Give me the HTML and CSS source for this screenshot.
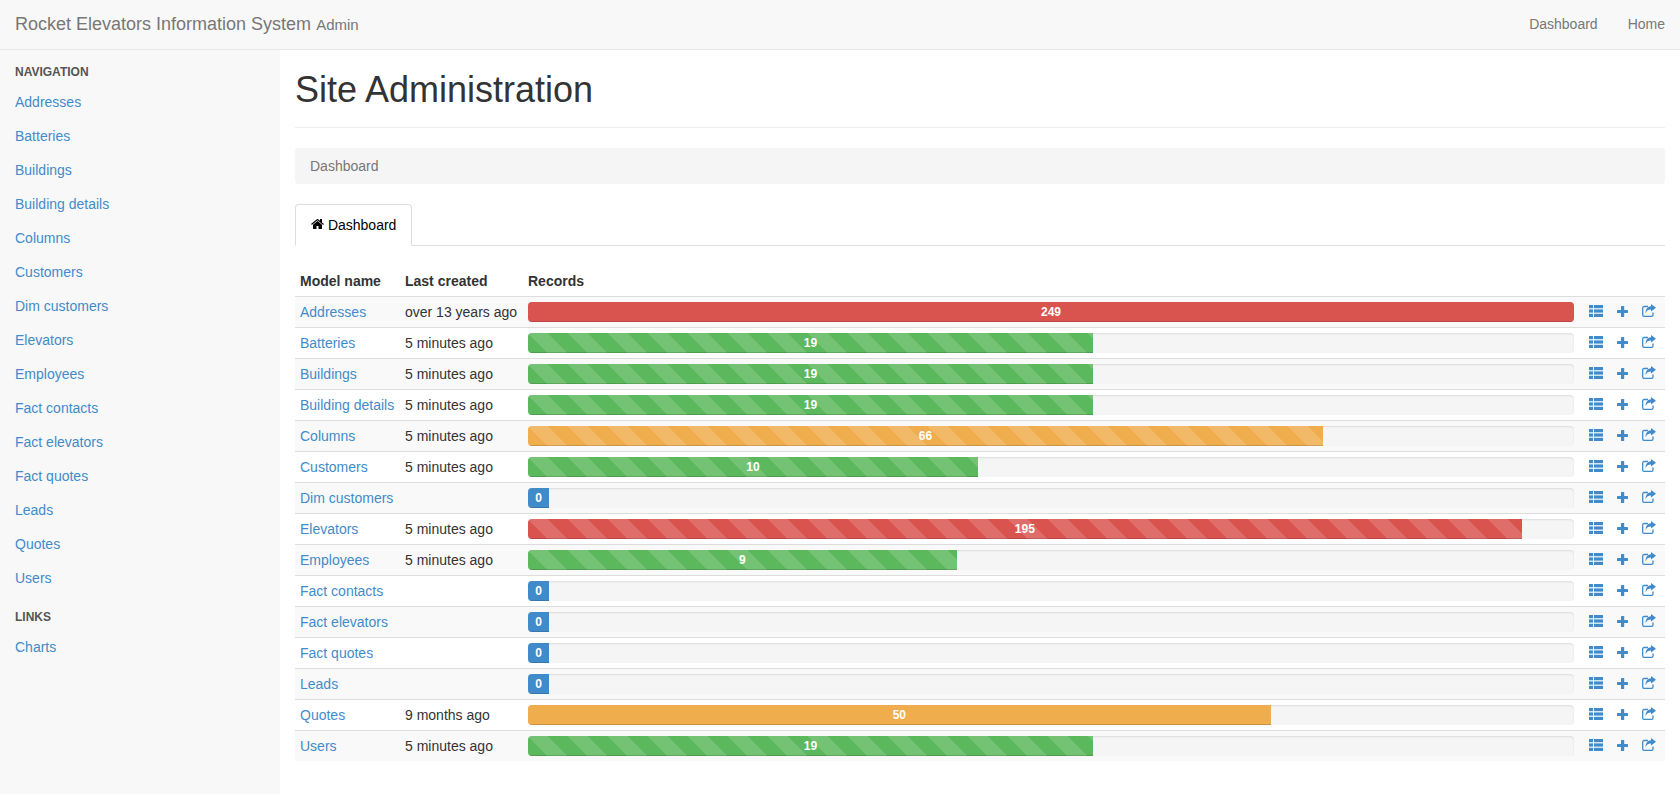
FILE: index.html
```html
<!DOCTYPE html>
<html lang="en">
<head>
    <meta charset="UTF-8">
    <meta name="viewport" content="width=device-width, initial-scale=1.0">
    <title>Site Administration</title>
    <link rel="stylesheet" href="styles.css">
</head>
<body>
    <!-- Icon sprite -->
    <svg class="sprite" xmlns="http://www.w3.org/2000/svg">
        <symbol id="i-home" viewBox="0 0 1792 1792">
            <path d="M1408 992v480q0 26-19 45t-45 19h-384v-384h-256v384h-384q-26 0-45-19t-19-45v-480q0-1 .5-3t.5-3l575-474 575 474q1 2 1 6zm223-69l-62 74q-8 9-21 11h-3q-13 0-21-7l-692-577-692 577q-12 8-24 7-13-2-21-11l-62-74q-8-10-7-23.5t11-21.5l719-599q32-26 76-26t76 26l244 204v-195q0-14 9-23t23-9h192q14 0 23 9t9 23v408l219 182q10 8 11 21.5t-7 23.5z"/>
        </symbol>
        <symbol id="i-list" viewBox="0 0 14 12">
            <rect x="0" y="0" width="4" height="3.2"/><rect x="5" y="0" width="9" height="3.2"/>
            <rect x="0" y="4.4" width="4" height="3.2"/><rect x="5" y="4.4" width="9" height="3.2"/>
            <rect x="0" y="8.8" width="4" height="3.2"/><rect x="5" y="8.8" width="9" height="3.2"/>
        </symbol>
        <symbol id="i-plus" viewBox="0 0 11 11">
            <rect x="4" y="0" width="3.2" height="11" rx=".6"/><rect x="0" y="3.9" width="11" height="3.2" rx=".6"/>
        </symbol>
        <symbol id="i-share" viewBox="0 0 14 13">
            <path d="M11 8.500V11a1.300 1.300 0 0 1-1.300 1.300H2A1.300 1.300 0 0 1 .7 11V3.800a1.300 1.300 0 0 1 1.300-1.300h4" fill="none" stroke="currentColor" stroke-width="1.300"/>
            <path d="M9 0l5 3.800-5 3.800V5.400C6.700 5.300 4.600 6 3.700 9.200 3.300 5.200 5.800 2.300 9 2.200z"/>
        </symbol>
    </svg>

    <nav class="navbar">
        <a class="brand" href="#">Rocket Elevators Information System <small>Admin</small></a>
        <ul class="navbar-links">
            <li><a href="#">Dashboard</a></li>
            <li><a href="#">Home</a></li>
        </ul>
    </nav>

    <div class="page">
        <aside class="sidebar">
            <h5 class="nav-header">Navigation</h5>
            <ul class="side-nav">
                <li><a href="#">Addresses</a></li>
                <li><a href="#">Batteries</a></li>
                <li><a href="#">Buildings</a></li>
                <li><a href="#">Building details</a></li>
                <li><a href="#">Columns</a></li>
                <li><a href="#">Customers</a></li>
                <li><a href="#">Dim customers</a></li>
                <li><a href="#">Elevators</a></li>
                <li><a href="#">Employees</a></li>
                <li><a href="#">Fact contacts</a></li>
                <li><a href="#">Fact elevators</a></li>
                <li><a href="#">Fact quotes</a></li>
                <li><a href="#">Leads</a></li>
                <li><a href="#">Quotes</a></li>
                <li><a href="#">Users</a></li>
            </ul>
            <h5 class="nav-header">Links</h5>
            <ul class="side-nav">
                <li><a href="#">Charts</a></li>
            </ul>
        </aside>

        <main class="content">
            <div class="page-header">
                <h1>Site Administration</h1>
            </div>
            <div class="breadcrumb">Dashboard</div>
            <ul class="tabs">
                <li class="tab"><svg class="icon-home"><use href="#i-home"/></svg> Dashboard</li>
            </ul>

            <table class="models">
                <colgroup>
                    <col class="col-name">
                    <col class="col-created">
                    <col>
                    <col class="col-actions">
                </colgroup>
                <thead>
                    <tr><th>Model name</th><th>Last created</th><th>Records</th><th></th></tr>
                </thead>
                <tbody>
                    <tr>
                        <td><a href="#">Addresses</a></td><td>over 13 years ago</td>
                        <td><div class="progress"><div class="bar bar-red" style="width: 100%">249</div></div></td>
                        <td class="actions"><svg class="ic-list"><use href="#i-list"/></svg><svg class="ic-plus"><use href="#i-plus"/></svg><svg class="ic-share"><use href="#i-share"/></svg></td>
                    </tr>
                    <tr>
                        <td><a href="#">Batteries</a></td><td>5 minutes ago</td>
                        <td><div class="progress"><div class="bar bar-green striped" style="width: 54%">19</div></div></td>
                        <td class="actions"><svg class="ic-list"><use href="#i-list"/></svg><svg class="ic-plus"><use href="#i-plus"/></svg><svg class="ic-share"><use href="#i-share"/></svg></td>
                    </tr>
                    <tr>
                        <td><a href="#">Buildings</a></td><td>5 minutes ago</td>
                        <td><div class="progress"><div class="bar bar-green striped" style="width: 54%">19</div></div></td>
                        <td class="actions"><svg class="ic-list"><use href="#i-list"/></svg><svg class="ic-plus"><use href="#i-plus"/></svg><svg class="ic-share"><use href="#i-share"/></svg></td>
                    </tr>
                    <tr>
                        <td><a href="#">Building details</a></td><td>5 minutes ago</td>
                        <td><div class="progress"><div class="bar bar-green striped" style="width: 54%">19</div></div></td>
                        <td class="actions"><svg class="ic-list"><use href="#i-list"/></svg><svg class="ic-plus"><use href="#i-plus"/></svg><svg class="ic-share"><use href="#i-share"/></svg></td>
                    </tr>
                    <tr>
                        <td><a href="#">Columns</a></td><td>5 minutes ago</td>
                        <td><div class="progress"><div class="bar bar-orange striped" style="width: 76%">66</div></div></td>
                        <td class="actions"><svg class="ic-list"><use href="#i-list"/></svg><svg class="ic-plus"><use href="#i-plus"/></svg><svg class="ic-share"><use href="#i-share"/></svg></td>
                    </tr>
                    <tr>
                        <td><a href="#">Customers</a></td><td>5 minutes ago</td>
                        <td><div class="progress"><div class="bar bar-green striped" style="width: 43%">10</div></div></td>
                        <td class="actions"><svg class="ic-list"><use href="#i-list"/></svg><svg class="ic-plus"><use href="#i-plus"/></svg><svg class="ic-share"><use href="#i-share"/></svg></td>
                    </tr>
                    <tr>
                        <td><a href="#">Dim customers</a></td><td></td>
                        <td><div class="progress"><div class="bar bar-blue bar-empty">0</div></div></td>
                        <td class="actions"><svg class="ic-list"><use href="#i-list"/></svg><svg class="ic-plus"><use href="#i-plus"/></svg><svg class="ic-share"><use href="#i-share"/></svg></td>
                    </tr>
                    <tr>
                        <td><a href="#">Elevators</a></td><td>5 minutes ago</td>
                        <td><div class="progress"><div class="bar bar-red striped" style="width: 95%">195</div></div></td>
                        <td class="actions"><svg class="ic-list"><use href="#i-list"/></svg><svg class="ic-plus"><use href="#i-plus"/></svg><svg class="ic-share"><use href="#i-share"/></svg></td>
                    </tr>
                    <tr>
                        <td><a href="#">Employees</a></td><td>5 minutes ago</td>
                        <td><div class="progress"><div class="bar bar-green striped" style="width: 41%">9</div></div></td>
                        <td class="actions"><svg class="ic-list"><use href="#i-list"/></svg><svg class="ic-plus"><use href="#i-plus"/></svg><svg class="ic-share"><use href="#i-share"/></svg></td>
                    </tr>
                    <tr>
                        <td><a href="#">Fact contacts</a></td><td></td>
                        <td><div class="progress"><div class="bar bar-blue bar-empty">0</div></div></td>
                        <td class="actions"><svg class="ic-list"><use href="#i-list"/></svg><svg class="ic-plus"><use href="#i-plus"/></svg><svg class="ic-share"><use href="#i-share"/></svg></td>
                    </tr>
                    <tr>
                        <td><a href="#">Fact elevators</a></td><td></td>
                        <td><div class="progress"><div class="bar bar-blue bar-empty">0</div></div></td>
                        <td class="actions"><svg class="ic-list"><use href="#i-list"/></svg><svg class="ic-plus"><use href="#i-plus"/></svg><svg class="ic-share"><use href="#i-share"/></svg></td>
                    </tr>
                    <tr>
                        <td><a href="#">Fact quotes</a></td><td></td>
                        <td><div class="progress"><div class="bar bar-blue bar-empty">0</div></div></td>
                        <td class="actions"><svg class="ic-list"><use href="#i-list"/></svg><svg class="ic-plus"><use href="#i-plus"/></svg><svg class="ic-share"><use href="#i-share"/></svg></td>
                    </tr>
                    <tr>
                        <td><a href="#">Leads</a></td><td></td>
                        <td><div class="progress"><div class="bar bar-blue bar-empty">0</div></div></td>
                        <td class="actions"><svg class="ic-list"><use href="#i-list"/></svg><svg class="ic-plus"><use href="#i-plus"/></svg><svg class="ic-share"><use href="#i-share"/></svg></td>
                    </tr>
                    <tr>
                        <td><a href="#">Quotes</a></td><td>9 months ago</td>
                        <td><div class="progress"><div class="bar bar-orange" style="width: 71%">50</div></div></td>
                        <td class="actions"><svg class="ic-list"><use href="#i-list"/></svg><svg class="ic-plus"><use href="#i-plus"/></svg><svg class="ic-share"><use href="#i-share"/></svg></td>
                    </tr>
                    <tr>
                        <td><a href="#">Users</a></td><td>5 minutes ago</td>
                        <td><div class="progress"><div class="bar bar-green striped" style="width: 54%">19</div></div></td>
                        <td class="actions"><svg class="ic-list"><use href="#i-list"/></svg><svg class="ic-plus"><use href="#i-plus"/></svg><svg class="ic-share"><use href="#i-share"/></svg></td>
                    </tr>
                </tbody>
            </table>
        </main>
    </div>
</body>
</html>
```

FILE: styles.css
```css
* {
    box-sizing: border-box;
}
body {
    margin: 0;
    font-family: "Liberation Sans", Arial, sans-serif;
    font-size: 14px;
    line-height: 20px;
    color: #333;
    background-color: #fff;
}
a {
    color: #428bca;
    text-decoration: none;
}
ul {
    list-style: none;
    margin: 0;
    padding: 0;
}
.sprite {
    position: absolute;
    width: 0;
    height: 0;
}

/* Top bar */
.navbar {
    display: flex;
    justify-content: space-between;
    height: 50px;
    background-color: #f8f8f8;
    border-bottom: 1px solid #e7e7e7;
}
.brand {
    padding: 14px 15px;
    font-size: 18px;
    color: #777;
}
.brand small {
    font-size: 15px;
}
.navbar-links {
    display: flex;
}
.navbar-links a {
    display: block;
    padding: 14px 15px;
    color: #777;
}

/* Layout */
.page {
    display: flex;
    min-height: 744px;
}
.sidebar {
    flex: 0 0 280px;
    padding-top: 10px;
    background-color: #f8f8f8;
}
.content {
    flex: 1;
    padding: 20px 15px 0;
}

/* Sidebar */
.nav-header {
    margin: 0;
    padding: 4px 15px;
    font-size: 12px;
    line-height: 17px;
    font-weight: bold;
    color: #555;
    text-transform: uppercase;
}
.side-nav {
    margin-bottom: 10px;
}
.side-nav a {
    display: block;
    padding: 7px 15px;
}

/* Heading area */
.page-header {
    padding-bottom: 17px;
    margin-bottom: 20px;
    border-bottom: 1px solid #eee;
}
h1 {
    margin: 0;
    font-size: 36px;
    font-weight: 500;
    line-height: 40px;
}
.breadcrumb {
    padding: 8px 15px;
    margin-bottom: 20px;
    background-color: #f5f5f5;
    border-radius: 4px;
    color: #777;
}
.tabs {
    display: flex;
    height: 42px;
    margin-bottom: 20px;
    border-bottom: 1px solid #ddd;
}
.tab {
    height: 42px;
    padding: 10px 15px;
    color: #000;
    background-color: #fff;
    border: 1px solid #ddd;
    border-bottom-color: transparent;
    border-radius: 4px 4px 0 0;
}
.icon-home {
    width: 14px;
    height: 14px;
    margin-right: -1px;
    vertical-align: -1px;
    fill: #000;
}

/* Models table */
.models {
    width: 100%;
    table-layout: fixed;
    border-collapse: collapse;
}
.col-name {
    width: 105px;
}
.col-created {
    width: 123px;
}
.col-actions {
    width: 86px;
}
.models th {
    padding: 5px;
    text-align: left;
    font-weight: bold;
    border-bottom: 1px solid #ddd;
}
.models td {
    padding: 5px;
    height: 31px;
    white-space: nowrap;
    border-bottom: 1px solid #ddd;
}
.models tbody tr:nth-child(odd) {
    background-color: #f9f9f9;
}
.models tbody tr:last-child td {
    height: 30px;
    border-bottom: 0;
}

/* Record bars */
.progress {
    height: 20px;
    overflow: hidden;
    background-color: #f5f5f5;
    border-radius: 4px;
    box-shadow: inset 0 1px 2px rgba(0, 0, 0, 0.1);
}
.bar {
    height: 20px;
    font-size: 12px;
    font-weight: bold;
    line-height: 20px;
    color: #fff;
    text-align: center;
    box-shadow: inset 0 -1px 0 rgba(0, 0, 0, 0.15);
}
.bar-empty {
    width: 21px;
}
.bar-red {
    background-color: #d9534f;
}
.bar-green {
    background-color: #5cb85c;
}
.bar-orange {
    background-color: #f0ad4e;
}
.bar-blue {
    background-color: #428bca;
}
.striped {
    background-image: linear-gradient(45deg, rgba(255, 255, 255, 0.15) 25%, transparent 25%, transparent 50%, rgba(255, 255, 255, 0.15) 50%, rgba(255, 255, 255, 0.15) 75%, transparent 75%, transparent);
    background-size: 40px 40px;
}

/* Row actions */
.models td.actions {
    padding: 4px 5px 6px 10px;
    line-height: 0;
    color: #428bca;
    fill: #428bca;
}
.actions svg {
    vertical-align: middle;
}
.ic-list {
    width: 14px;
    height: 12px;
    margin-right: 14px;
}
.ic-plus {
    width: 11px;
    height: 11px;
    margin-right: 14px;
}
.ic-share {
    width: 14px;
    height: 13px;
    margin-bottom: 2px;
}
```
